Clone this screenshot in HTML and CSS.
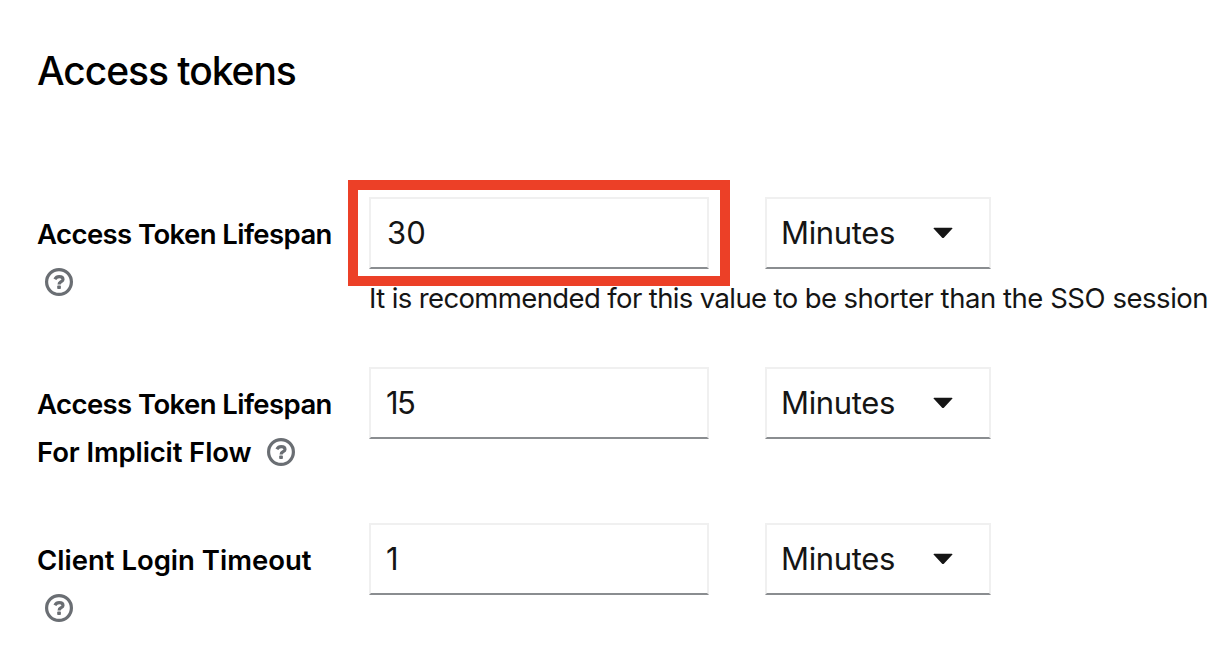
FILE: index.html
```html
<!DOCTYPE html>
<html lang="en">
<head>
<meta charset="utf-8">
<title>Access tokens</title>
<link rel="stylesheet" href="styles.css">
</head>
<body>
<svg class="defs" aria-hidden="true">
  <symbol id="help" viewBox="0 0 28 28">
    <circle cx="14" cy="14" r="12.4" fill="none" stroke="currentColor" stroke-width="3.200"/>
    <path d="M9.900 11.200C10.800 9.500 12.100 8.600 14.100 8.600c2.200 0 3.900 1.100 3.900 2.800 0 2.500-3.900 2.200-3.900 5" fill="none" stroke="currentColor" stroke-width="3.200"/>
    <rect x="12.200" y="17.600" width="3.700" height="3.500" rx=".8" fill="currentColor"/>
  </symbol>
  <symbol id="caret" viewBox="0 0 20 12">
    <path d="M1.200 .8h17.600q1.300 0 .4 1l-8.100 8.800q-1.100 1-2.200 0L.8 1.800q-.9-1 .4-1z" fill="currentColor"/>
  </symbol>
</svg>
<main class="section">
  <h1 class="title"><span>Access tokens</span></h1>
  <div class="row row-first">
    <div class="label">
      <span class="line l-access">Access Token Lifespan</span>
      <span class="line indent"><svg class="help"><use href="#help"/></svg></span>
    </div>
    <div class="control">
      <div class="fields">
        <div class="input marked"><span>30</span></div>
        <div class="select"><span class="minutes">Minutes</span><svg class="caret"><use href="#caret"/></svg></div>
      </div>
      <p class="hint"><span>It is recommended for this value to be </span><span class="hint-end">shorter than the SSO session</span></p>
    </div>
  </div>
  <div class="row row-second">
    <div class="label">
      <span class="line l-access">Access Token Lifespan</span>
      <span class="line"><span class="l-flow">For Implicit Flow</span><svg class="help after"><use href="#help"/></svg></span>
    </div>
    <div class="control">
      <div class="fields">
        <div class="input narrow"><span class="tight">15</span></div>
        <div class="select"><span class="minutes">Minutes</span><svg class="caret"><use href="#caret"/></svg></div>
      </div>
    </div>
  </div>
  <div class="row">
    <div class="label">
      <span class="line l-client">Client Login Timeout</span>
      <span class="line indent"><svg class="help"><use href="#help"/></svg></span>
    </div>
    <div class="control">
      <div class="fields">
        <div class="input narrow"><span>1</span></div>
        <div class="select"><span class="minutes">Minutes</span><svg class="caret"><use href="#caret"/></svg></div>
      </div>
    </div>
  </div>
</main>
</body>
</html>
```
FILE: styles.css
```css
* { box-sizing: border-box; }
body {
  margin: 0;
  background: #fff;
  color: #151515;
  font-family: Inter, "Open Sans", sans-serif;
  overflow: hidden;
}
.defs { display: none; }
.section { padding: 46px 0 0 37px; }
.title {
  margin: 0;
  height: 151px;
  font-size: 39px;
  line-height: 50px;
  font-weight: 500;
  letter-spacing: -1.05px;
  color: #000;
  white-space: nowrap;
}
.row {
  display: grid;
  grid-template-columns: 332px 1fr;
  height: 156px;
}
.row-first { height: 170px; }
.label {
  padding-top: 13px;
  font-size: 27.5px;
  font-weight: 600;
  color: #000;
}
.line {
  display: flex;
  align-items: center;
  height: 48px;
  white-space: nowrap;
}
.l-access { letter-spacing: -0.58px; }
.l-flow { letter-spacing: -0.12px; }
.l-client { letter-spacing: 0; }
.indent { padding-left: 8px; }
.help { width: 28px; height: 28px; color: #6a6e73; flex: none; }
.after { margin-left: 16px; }
.fields { display: flex; gap: 56px; }
.input, .select {
  height: 72px;
  display: flex;
  align-items: center;
  border: 2px solid #f0f0f0;
  border-bottom-color: #8a8d90;
  font-size: 31px;
}
.input > span, .minutes { padding-bottom: 2px; }
.tight { letter-spacing: -1.7px; }
.minutes { letter-spacing: -0.35px; }
.input { width: 340px; padding-left: 16px; position: relative; }
.narrow { padding-left: 15px; }
.marked::after {
  content: "";
  box-sizing: border-box;
  position: absolute;
  left: -23px;
  top: -19px;
  width: 382px;
  height: 106px;
  border: 10px solid #ec4027;
  z-index: 1;
}
.select { width: 226px; padding: 0 36px 0 14px; justify-content: space-between; }
.caret { width: 20px; height: 12px; }
.hint {
  margin: 9px 0 0;
  font-size: 27.5px;
  line-height: 40px;
  letter-spacing: -0.62px;
  white-space: nowrap;
}
.hint-end { letter-spacing: -0.46px; }
```
